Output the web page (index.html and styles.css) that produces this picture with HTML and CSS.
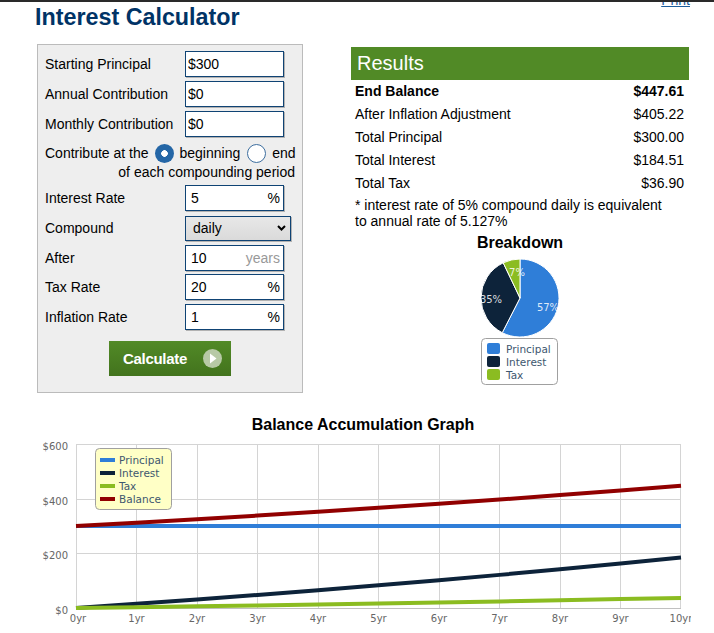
FILE: index.html
```html
<!DOCTYPE html>
<html lang="en">
<head>
    <meta charset="UTF-8">
    <meta name="viewport" content="width=device-width, initial-scale=1.0">
    <title>Interest Calculator</title>
    <link rel="stylesheet" href="styles.css">
</head>
<body>
    <div class="top-bar"></div>
    <div class="page">
        <a href="#" class="print-link">Print</a>
        <h1 class="page-title">Interest Calculator</h1>

        <div class="main-row">
            <form class="calc-box">
                <div class="calc-row">
                    <label class="calc-label">Starting Principal</label>
                    <input class="money-input" type="text" value="$300">
                </div>
                <div class="calc-row">
                    <label class="calc-label">Annual Contribution</label>
                    <input class="money-input" type="text" value="$0">
                </div>
                <div class="calc-row">
                    <label class="calc-label">Monthly Contribution</label>
                    <input class="money-input" type="text" value="$0">
                </div>

                <div class="contribute">
                    <div class="contribute-line">
                        <span>Contribute at the</span>
                        <span class="radio checked"></span>
                        <span class="radio-text">beginning</span>
                        <span class="radio radio-end"></span>
                        <span class="radio-text">end</span>
                    </div>
                    <div class="contribute-note">of each compounding period</div>
                </div>

                <div class="calc-row">
                    <label class="calc-label">Interest Rate</label>
                    <div class="unit-field"><input type="text" value="5"><span class="unit">%</span></div>
                </div>
                <div class="calc-row">
                    <label class="calc-label">Compound</label>
                    <div class="select-field">
                        <select>
                            <option>daily</option>
                        </select>
                        <svg class="chevron" width="9" height="6" viewBox="0 0 9 6"><polyline points="1,1 4.5,4.5 8,1" fill="none" stroke="#000" stroke-width="2"/></svg>
                    </div>
                </div>
                <div class="calc-row">
                    <label class="calc-label">After</label>
                    <div class="unit-field"><input type="text" value="10"><span class="unit years">years</span></div>
                </div>
                <div class="calc-row tight">
                    <label class="calc-label">Tax Rate</label>
                    <div class="unit-field"><input type="text" value="20"><span class="unit">%</span></div>
                </div>
                <div class="calc-row">
                    <label class="calc-label">Inflation Rate</label>
                    <div class="unit-field"><input type="text" value="1"><span class="unit">%</span></div>
                </div>

                <button type="button" class="calc-button">
                    Calculate
                    <svg class="go-icon" width="19" height="19" viewBox="0 0 19 19">
                        <circle cx="9.5" cy="9.5" r="9.5" fill="#b7c9a6"/>
                        <polygon points="7,4.5 13.5,9.5 7,14.5" fill="#fff"/>
                    </svg>
                </button>
            </form>

            <div class="results">
                <div class="results-head">Results</div>
                <div class="result-row total"><span>End Balance</span><span>$447.61</span></div>
                <div class="result-row"><span>After Inflation Adjustment</span><span>$405.22</span></div>
                <div class="result-row"><span>Total Principal</span><span>$300.00</span></div>
                <div class="result-row"><span>Total Interest</span><span>$184.51</span></div>
                <div class="result-row"><span>Total Tax</span><span>$36.90</span></div>
                <div class="result-note">* interest rate of 5% compound daily is equivalent to annual rate of 5.127%</div>

                <div class="breakdown-title">Breakdown</div>
                <svg class="pie" width="100" height="135" viewBox="0 0 100 135">
                    <!-- slices go clockwise from the top: principal, interest, tax -->
                    <path d="M50 44 L50 5 A39 39 0 1 1 32.24 78.72 Z" fill="#2f7ed8" stroke="#fff" stroke-width="1"/>
                    <path d="M50 44 L32.24 78.72 A39 39 0 0 1 33.21 8.8 Z" fill="#0d233a" stroke="#fff" stroke-width="1"/>
                    <path d="M50 44 L33.21 8.8 A39 39 0 0 1 50 5 Z" fill="#8bbc21" stroke="#fff" stroke-width="1"/>
                    <g class="pie-label">
                        <text x="78" y="57" text-anchor="middle">57%</text>
                        <text x="21" y="49" text-anchor="middle">35%</text>
                        <text x="47" y="22" text-anchor="middle">7%</text>
                    </g>

                    <rect x="11.5" y="84.5" width="76" height="46" rx="4" fill="#fff" stroke="#a0a0a0"/>
                    <g class="legend-text">
                        <rect x="17" y="89" width="13" height="11" rx="2" fill="#2f7ed8"/>
                        <text x="36" y="98.5">Principal</text>
                        <rect x="17" y="102" width="13" height="11" rx="2" fill="#0d233a"/>
                        <text x="36" y="111.5">Interest</text>
                        <rect x="17" y="115" width="13" height="11" rx="2" fill="#8bbc21"/>
                        <text x="36" y="124.5">Tax</text>
                    </g>
                </svg>
            </div>
        </div>

        <div class="graph">
            <div class="graph-title">Balance Accumulation Graph</div>
            <svg class="graph-chart" width="656" height="193" viewBox="0 0 656 193">
                <!-- grid: 10 years across, $0 - $600 up -->
                <g stroke="#d4d4d4" stroke-width="1">
                    <line x1="41" y1="4.5" x2="646" y2="4.5"/>
                    <line x1="41" y1="59.5" x2="646" y2="59.5"/>
                    <line x1="41" y1="113.5" x2="646" y2="113.5"/>
                    <line x1="41.5" y1="4" x2="41.5" y2="168"/>
                    <line x1="101.5" y1="4" x2="101.5" y2="168"/>
                    <line x1="162.5" y1="4" x2="162.5" y2="168"/>
                    <line x1="222.5" y1="4" x2="222.5" y2="168"/>
                    <line x1="283.5" y1="4" x2="283.5" y2="168"/>
                    <line x1="343.5" y1="4" x2="343.5" y2="168"/>
                    <line x1="404.5" y1="4" x2="404.5" y2="168"/>
                    <line x1="464.5" y1="4" x2="464.5" y2="168"/>
                    <line x1="525.5" y1="4" x2="525.5" y2="168"/>
                    <line x1="585.5" y1="4" x2="585.5" y2="168"/>
                    <line x1="645.5" y1="4" x2="645.5" y2="168"/>
                </g>
                <line x1="41" y1="168.5" x2="646" y2="168.5" stroke="#c0c0c0"/>

                <g class="axis-label" text-anchor="end">
                    <text x="33" y="9.5">$600</text>
                    <text x="33" y="64.5">$400</text>
                    <text x="33" y="118.5">$200</text>
                    <text x="33" y="173.5">$0</text>
                </g>
                <g class="axis-label" text-anchor="middle">
                    <text x="43" y="182">0yr</text>
                    <text x="101.5" y="182">1yr</text>
                    <text x="162" y="182">2yr</text>
                    <text x="222.5" y="182">3yr</text>
                    <text x="283" y="182">4yr</text>
                    <text x="343.5" y="182">5yr</text>
                    <text x="404" y="182">6yr</text>
                    <text x="464.5" y="182">7yr</text>
                    <text x="525" y="182">8yr</text>
                    <text x="585.5" y="182">9yr</text>
                    <text x="646" y="182">10yr</text>
                </g>

                <g fill="none" stroke-width="4" stroke-linejoin="round">
                    <polyline stroke="#2f7ed8" points="41,86 646,86"/>
                    <polyline stroke="#0d233a" points="41,168 101.5,163.82 162,159.46 222.5,154.93 283,150.22 343.5,145.31 404,140.2 464.5,134.88 525,129.35 585.5,123.59 646,117.57"/>
                    <polyline stroke="#8bbc21" points="41,168 101.5,167.16 162,166.29 222.5,165.39 283,164.44 343.5,163.46 404,162.44 464.5,161.38 525,160.27 585.5,159.12 646,157.91"/>
                    <polyline stroke="#910000" points="41,86 101.5,82.65 162,79.17 222.5,75.54 283,71.77 343.5,67.85 404,63.76 464.5,59.51 525,55.08 585.5,50.47 646,45.65"/>
                </g>

                <rect x="60.5" y="8.5" width="76" height="61" rx="4" fill="#ffffc6" stroke="#a0a0a0"/>
                <g stroke-width="4">
                    <line x1="65" y1="20" x2="80" y2="20" stroke="#2f7ed8"/>
                    <line x1="65" y1="33" x2="80" y2="33" stroke="#0d233a"/>
                    <line x1="65" y1="46" x2="80" y2="46" stroke="#8bbc21"/>
                    <line x1="65" y1="59" x2="80" y2="59" stroke="#910000"/>
                </g>
                <g class="legend-text">
                    <text x="84" y="24">Principal</text>
                    <text x="84" y="37">Interest</text>
                    <text x="84" y="50">Tax</text>
                    <text x="84" y="63">Balance</text>
                </g>
            </svg>
        </div>
    </div>
</body>
</html>
```

FILE: styles.css
```css
body {
    margin: 0;
    font-family: "Liberation Sans", Arial, sans-serif;
    font-size: 14px;
    color: #000;
    background-color: #fff;
    overflow: hidden;
}

.top-bar {
    position: relative;
    z-index: 1;
    height: 2px;
    background-color: #2a2a2a;
}

.page {
    position: relative;
    width: 656px;
    padding-left: 35px;
}

/* sits half under the top bar */
.print-link {
    position: absolute;
    top: -12px;
    right: 1px;
    color: #1d5d9c;
    font-size: 14px;
}

.page-title {
    margin: 2px 0 0;
    font-size: 23.3px;
    line-height: 26px;
    font-weight: bold;
    color: #003366;
}

.main-row {
    display: flex;
    align-items: flex-start;
    margin-top: 14px;
}

/* calculator form */
.calc-box {
    display: flex;
    flex-direction: column;
    width: 250px;
    margin: 0 0 0 2px;
    padding: 6px 7px 16px;
    background-color: #eee;
    border: 1px solid #bbb;
}

.calc-row {
    display: flex;
    align-items: center;
    height: 26px;
    margin-top: 4px;
}

.calc-row:first-child {
    margin-top: 0;
}

.calc-row.tight {
    margin-top: 3px;
}

.calc-label {
    width: 140px;
    flex-shrink: 0;
}

.money-input,
.unit-field,
.select-field {
    box-sizing: border-box;
    height: 26px;
    border: 1px solid #0f4374;
    box-shadow: 1px 1px 0 rgba(0, 0, 0, 0.25);
    background-color: #fff;
}

.money-input {
    width: 99px;
    padding: 0 2px;
    font: inherit;
    color: #000;
    outline: none;
}

.unit-field {
    display: flex;
    align-items: center;
    width: 99px;
    padding: 0 3px 0 5px;
}

.unit-field input {
    flex: 1;
    min-width: 0;
    padding: 0;
    border: 0;
    font: inherit;
    color: #000;
    background: transparent;
    outline: none;
}

.unit.years {
    color: #999;
}

.select-field {
    display: flex;
    align-items: center;
    width: 106px;
    height: 25px;
    padding-right: 4px;
    background: linear-gradient(#e8e8e8, #dadada);
}

.select-field select {
    flex: 1;
    appearance: none;
    -webkit-appearance: none;
    padding: 0 0 0 7px;
    border: 0;
    font: inherit;
    color: #000;
    background: transparent;
    outline: none;
}

/* contribute at beginning / end */
.contribute {
    margin: 6px 0 0;
}

.contribute-line {
    display: flex;
    align-items: center;
    height: 20px;
    white-space: nowrap;
}

.contribute-line span {
    flex-shrink: 0;
}

.radio {
    box-sizing: border-box;
    width: 19px;
    height: 19px;
    margin-left: 6px;
    border: 1px solid #3d6e9f;
    border-radius: 50%;
    background-color: #fff;
}

.radio.checked {
    border: 0;
    background: radial-gradient(circle, #fff 0 3px, #2466a6 3.6px);
}

.radio-end {
    margin-left: 7px;
}

.radio-text {
    margin-left: 6px;
}

.contribute-note {
    line-height: 18px;
    text-align: right;
}

.calc-button {
    display: flex;
    align-items: center;
    align-self: center;
    height: 35px;
    margin-top: 11px;
    padding: 0 9px 0 14px;
    border: 0;
    background: linear-gradient(#528a27, #42731d);
    color: #fff;
    font-family: inherit;
    font-size: 15px;
    font-weight: bold;
    letter-spacing: -0.3px;
}

.go-icon {
    margin-left: 16px;
}

/* results panel */
.results {
    width: 338px;
    margin: 3px 0 0 48px;
}

.results-head {
    height: 33px;
    padding-left: 6px;
    line-height: 33px;
    font-size: 20px;
    color: #fff;
    background-color: #518a26;
}

.result-row {
    display: flex;
    justify-content: space-between;
    height: 23px;
    line-height: 23px;
    padding: 0 5px 0 4px;
}

.result-row.total {
    font-weight: bold;
}

.result-note {
    margin-top: 2px;
    padding: 0 16px 0 4px;
    line-height: 16px;
}

.breakdown-title {
    margin-top: 4px;
    line-height: 20px;
    font-size: 16px;
    font-weight: bold;
    text-align: center;
}

.pie {
    display: block;
    margin: 1px auto 0;
}

.pie-label {
    font-family: "DejaVu Sans", Verdana, sans-serif;
    font-size: 10px;
    fill: #fff;
    fill-opacity: 0.85;
}

.legend-text {
    font-family: "DejaVu Sans", Verdana, sans-serif;
    font-size: 10.5px;
    fill: #3e576f;
}

/* balance graph */
.graph {
    margin-top: 22px;
}

.graph-title {
    line-height: 20px;
    font-size: 16px;
    font-weight: bold;
    text-align: center;
}

.graph-chart {
    display: block;
    margin-top: 5px;
}

.axis-label {
    font-family: "DejaVu Sans", Verdana, sans-serif;
    font-size: 10px;
    fill: #666;
}
```
